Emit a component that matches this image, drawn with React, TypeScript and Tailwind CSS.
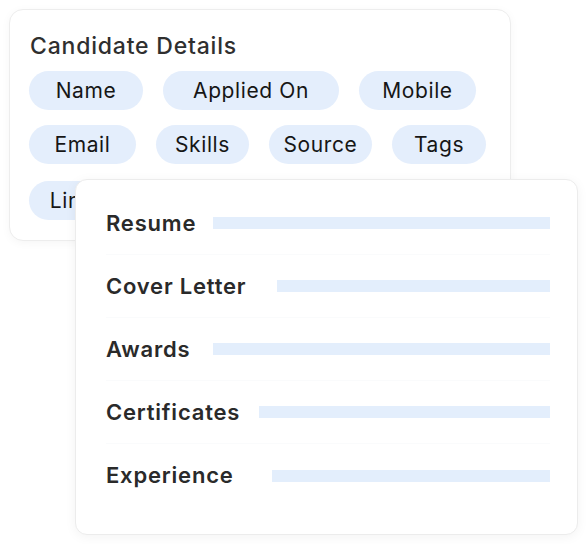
const chipRows = [
  [
    { label: 'Name', w: 'w-[114px]' },
    { label: 'Applied On', w: 'w-[176px]' },
    { label: 'Mobile', w: 'w-[117px]' },
  ],
  [
    { label: 'Email', w: 'w-[107px]' },
    { label: 'Skills', w: 'w-[93px]' },
    { label: 'Source', w: 'w-[103px]' },
    { label: 'Tags', w: 'w-[94px]' },
  ],
  [{ label: 'LinkedIn', w: 'w-[130px]' }],
]

const docs = [
  { label: 'Resume', w: 'w-[107px]' },
  { label: 'Cover Letter', w: 'w-[171px]' },
  { label: 'Awards', w: 'w-[107px]' },
  { label: 'Certificates', w: 'w-[153px]' },
  { label: 'Experience', w: 'w-[166px]' },
]

export default function App() {
  return (
    <div className="relative w-[586px] h-[544px] bg-white overflow-hidden" style={{ fontFamily: 'Inter, "Noto Sans", sans-serif' }}>
      {/* candidate details card */}
      <div className="ml-[9px] mt-[9px] w-[502px] h-[232px] rounded-[14px] bg-white border border-[#ededed] shadow-[0_2px_10px_rgba(0,0,0,0.04)] pl-[19px] pt-[21px]">
        <h2 className="pl-[1px] text-[23px] leading-[30px] font-medium text-[#2f2f2f] tracking-[0.8px]">Candidate Details</h2>
        <div className="mt-[10px] flex flex-col">
          {chipRows.map((row, i) => (
            <div key={i} className={`flex gap-x-[20px] ${i === 0 ? '' : i === 1 ? 'mt-[15px]' : 'mt-[17px]'}`}>
              {row.map(c => (
                <div key={c.label} className={`${c.w} h-[39px] shrink-0 rounded-full bg-[#e4eefc] flex items-center justify-center text-[21px] text-[#161616] tracking-[0.6px]`}>
                  {c.label}
                </div>
              ))}
            </div>
          ))}
        </div>
      </div>

      {/* documents card, overlapping */}
      <div className="absolute left-[75px] top-[179px] w-[503px] h-[356px] rounded-[12px] bg-white border border-[#ececec] shadow-[0_2px_12px_rgba(0,0,0,0.05)] pt-[12px] pl-[30px] pr-[27px]">
        {docs.map((d, i) => (
          <div key={d.label} className={`flex items-center h-[63px] ${i < docs.length - 1 ? 'border-b border-[#fafbfc]' : ''}`}>
            <div className={`${d.w} shrink-0 text-[22px] font-semibold text-[#2a2a2a] tracking-[0.8px] whitespace-nowrap`}>{d.label}</div>
            <div className="flex-1 h-[12px] bg-[#e3eefc]" />
          </div>
        ))}
      </div>
    </div>
  )
}
